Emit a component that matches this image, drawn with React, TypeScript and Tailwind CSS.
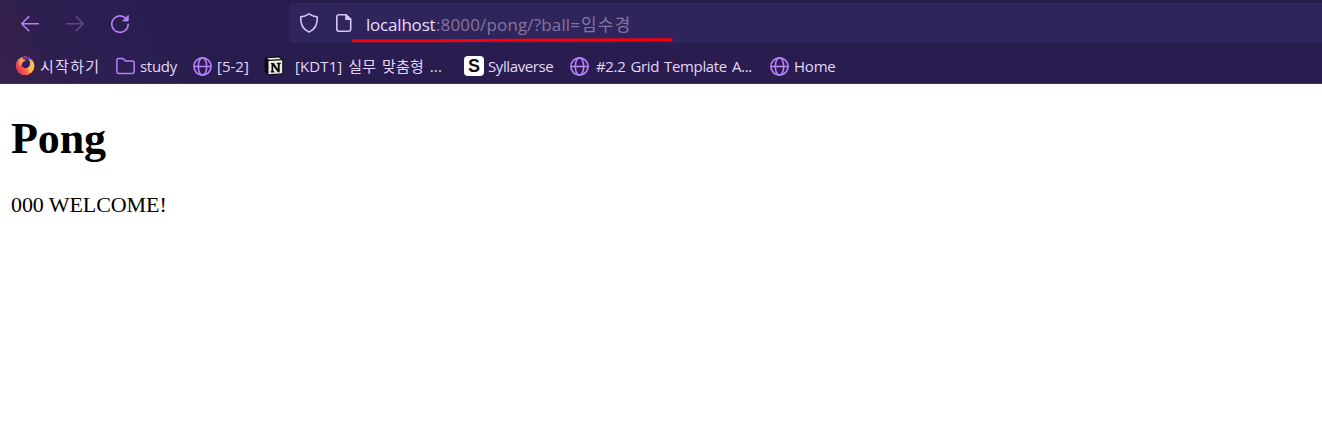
import type { ReactNode } from "react";

function Globe() {
  return (
    <svg className="h-[19px] w-[19px]" viewBox="0 0 19 19" fill="none" stroke="#b881f8" strokeWidth="1.6">
      <circle cx="9.5" cy="9.5" r="8.6" />
      <ellipse cx="9.5" cy="9.5" rx="4.2" ry="8.6" />
      <path d="M1 9.5h17" />
    </svg>
  );
}

function Folder() {
  return (
    <svg className="h-[19px] w-[19px]" viewBox="0 0 19 19" fill="none" stroke="#b881f8" strokeWidth="1.5" strokeLinejoin="round">
      <path d="M.9 14.8V3.1q0-1.7 1.7-1.7h3.7q.7 0 1.2.5l2 2.1h7q1.7 0 1.7 1.7v9.1q0 1.7-1.7 1.7H2.6Q.9 16.5.9 14.8Z" />
    </svg>
  );
}

function Firefox() {
  return (
    <svg className="h-[20px] w-[20px]" viewBox="0 0 20 20">
      <defs>
        <linearGradient id="flame" x1="0.9" y1="0.15" x2="0.1" y2="0.7">
          <stop offset="0" stopColor="#ffe04e" />
          <stop offset="0.4" stopColor="#ffa24a" />
          <stop offset="0.75" stopColor="#fa5850" />
          <stop offset="1" stopColor="#e23b50" />
        </linearGradient>
      </defs>
      <circle cx="10" cy="9.8" r="9.3" fill="url(#flame)" />
      <path d="M7.5.9C12 0 17.500 1.500 18.500 6.200L16.500 5.500 15 9.500 8 6Z" fill="#6339ac" />
      <circle cx="10.800" cy="7.800" r="4.500" fill="#35215f" />
      <path d="M4.200 3.400C6.500 2.600 9.800 3.200 11 4.800 8.500 5 7 6.500 7 8.500L4 9Z" fill="#ff9850" />
      <path d="M13.500 3C17 3.500 19.300 6.300 19.300 10c0 3-1.800 5.700-4.300 7L12.500 12C15.500 10.500 16.300 6.500 13.500 3Z" fill="#ffbd4d" />
    </svg>
  );
}

function Notion() {
  return (
    <svg className="h-[20px] w-[20px]" viewBox="0 0 20 20">
      <path d="M.7 1.500 15.500.3 19.300 3.300V18L4.500 19.500.7 15.500Z" fill="#0b0b0b" />
      <path d="M2.800 2.200 14.800 1.400 17 3 5.300 3.800Z" fill="#ecece9" />
      <path d="M4.500 5 18.200 4.200V17.200L4.500 18.200Z" fill="#ecece9" />
      <path d="M7 7h2.900l3.900 6V8.200l-1-.2V6.700h4V8l-1.100.3v7.900h-1.900L9.200 10v5l1.200.2v1.200H6.700v-1.200l.8-.2V8.200L7 8Z" fill="#0b0b0b" />
    </svg>
  );
}

function Syllaverse() {
  return (
    <span className="flex h-[20px] w-[20px] items-center justify-center rounded-[4px] bg-white font-['Liberation_Sans'] text-[18px] leading-[20px] font-bold text-[#101010]">
      S
    </span>
  );
}

function Bookmark({ icon, label, className, labelClass }: { icon: ReactNode; label: string; className: string; labelClass: string }) {
  return (
    <a className={`flex h-[22px] shrink-0 items-center ${className}`}>
      {icon}
      <span className={`whitespace-pre ${labelClass}`}>{label}</span>
    </a>
  );
}

function NavigationBar() {
  return (
    <div className="flex h-[46px] shrink-0 pt-[3px]">
      <div className="flex w-[289px] shrink-0 items-start pt-[11px] pl-[20px]">
        <svg className="mr-[25px] h-[20px] w-[20px]" viewBox="0 0 20 20" fill="none" stroke="#b881f8" strokeWidth="1.5" strokeLinecap="round" strokeLinejoin="round">
          <path d="M18.4 9.7H1.700M8.800 2.600 1.700 9.700l7.100 7.100" />
        </svg>
        <svg className="mr-[25px] h-[20px] w-[20px]" viewBox="0 0 20 20" fill="none" stroke="#684294" strokeWidth="1.5" strokeLinecap="round" strokeLinejoin="round">
          <path d="M1.600 9.700h16.700M11.200 2.600l7.100 7.100-7.100 7.100" />
        </svg>
        <svg className="h-[20px] w-[20px]" viewBox="0 0 20 20" fill="none" stroke="#b881f8" strokeWidth="1.6" strokeLinecap="round">
          <path d="M15.800 4.300A8.200 8.200 0 1 0 18.200 10.200" />
          <path d="M18.200 1.800v5.100h-5.100Z" fill="#b881f8" strokeWidth="1" strokeLinejoin="round" />
        </svg>
      </div>
      <div className="relative flex h-[40px] flex-1 items-start rounded-l-[5px] bg-[#2f255c] pl-[10px]">
        <svg className="mt-[9px] h-[22px] w-[20px]" viewBox="0 0 20 22" fill="none" stroke="#d5c6f4" strokeWidth="1.6" strokeLinejoin="round">
          <path d="M10 1.800Q13.700 4.300 18.200 4.700C18.700 11 16.500 17 10 20.100 3.500 17 1.300 11 1.800 4.700Q6.300 4.300 10 1.800Z" />
        </svg>
        <svg className="mt-[10px] ml-[16px] h-[20px] w-[18px]" viewBox="0 0 18 20" fill="none" stroke="#d5c6f4" strokeWidth="1.6" strokeLinejoin="round">
          <path d="M11 1.800H4Q1.800 1.800 1.800 4v12q0 2.200 2.200 2.200h9.500q2.200 0 2.200-2.200V6Z" />
          <path d="M11 2v4.300h4.500Z" fill="#d5c6f4" />
        </svg>
        <div className="mt-[9px] ml-[13px] flex h-[26px] text-[17px] leading-[26px] whitespace-pre text-[#84749f]">
          <span className="w-[70px] tracking-[-0.2px] text-[#e9dffc]">localhost</span>
          <span className="w-[145px] tracking-[0.15px]">:8000/pong/?ball=</span>
          <span className="tracking-[1.2px]">임수경</span>
        </div>
        <svg className="absolute top-[34px] left-[63px] h-[6px] w-[321px]" viewBox="0 0 321 6">
          <path d="M1 3.700H80L161 3.300 319 2.700" fill="none" stroke="#f80009" strokeWidth="3" strokeLinecap="round" />
        </svg>
      </div>
    </div>
  );
}

export default function App() {
  return (
    <div className="flex h-[435px] w-full flex-col overflow-hidden bg-white">
      <header className="flex h-[84px] shrink-0 flex-col overflow-hidden border-b border-[#3f3069] bg-[#291d4f] bg-[linear-gradient(65deg,#36214b_0px,#32204c_42px,#2d1f50_58px,#2c1f51_100px,#291d4f_190px)] font-['Open_Sans','Noto_Sans_CJK_KR',sans-serif]">
        <NavigationBar />
        <nav className="flex items-start pt-[9px] pl-[15px] text-[15px] leading-[22px] text-[#e4d7f8]">
          <Bookmark className="w-[101px]" icon={<Firefox />} label="시작하기" labelClass="ml-[5px] tracking-[1.3px]" />
          <Bookmark className="w-[77px]" icon={<Folder />} label="study" labelClass="ml-[5px] tracking-[-0.3px]" />
          <Bookmark className="w-[71px]" icon={<Globe />} label="[5-2]" labelClass="ml-[5px]" />
          <Bookmark className="w-[200px]" icon={<Notion />} label="[KDT1] 실무 맞춤형 ..." labelClass="ml-[11px] tracking-[0.1px] [word-spacing:2px]" />
          <Bookmark className="w-[106px]" icon={<Syllaverse />} label="Syllaverse" labelClass="ml-[4px] tracking-[-0.4px]" />
          <Bookmark className="w-[200px]" icon={<Globe />} label="#2.2 Grid Template A..." labelClass="ml-[7px] tracking-[-0.35px] [word-spacing:1.5px]" />
          <Bookmark className="w-[80px]" icon={<Globe />} label="Home" labelClass="ml-[5px] tracking-[-0.2px]" />
        </nav>
      </header>
      <main className="px-[11px] pt-[30px] font-['Liberation_Serif',serif] text-black">
        <h1 className="text-[44px] leading-[50px] font-bold tracking-[-0.1px]">Pong</h1>
        <p className="mt-[28px] text-[22px] leading-[26px] tracking-[-0.08px]">000 WELCOME!</p>
      </main>
    </div>
  );
}
